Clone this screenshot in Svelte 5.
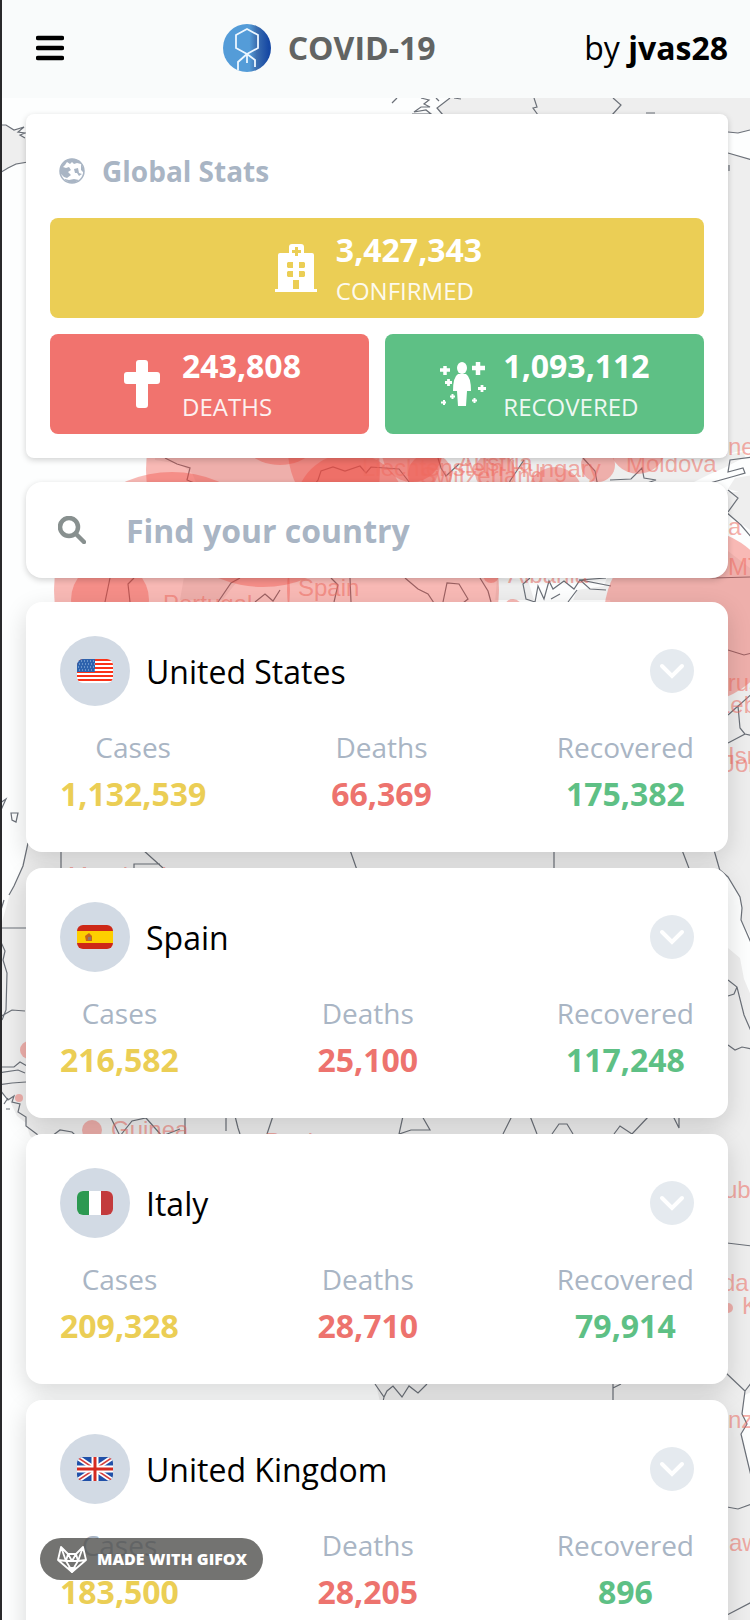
<script>
  const countries = [
    { name: 'United States', flag: 'us', cases: '1,132,539', deaths: '66,369', recovered: '175,382' },
    { name: 'Spain', flag: 'es', cases: '216,582', deaths: '25,100', recovered: '117,248' },
    { name: 'Italy', flag: 'it', cases: '209,328', deaths: '28,710', recovered: '79,914' },
    { name: 'United Kingdom', flag: 'gb', cases: '183,500', deaths: '28,205', recovered: '896' }
  ];
  let query = $state('');
</script>

<div class="page">
  <svg class="map" viewBox="0 0 750 1620" preserveAspectRatio="xMinYMin slice" aria-hidden="true">
    <g class="land">
      <path d="M443 114L437 108L450 98H760V130L748 130L738 133L728 132V120Z" />
      <path d="M728 153L760 161V480H728Z" />
      <path d="M-2 125L6 125L14 130L21 128L20 134L25 138L30 140V162L12 166L-2 174Z" />
      <path d="M155 460L180 464L192 473L197 485V500L180 600H750V420L724 455H155Z" />
      <path d="M28 843L20 873L9 897L4 915L-2 935V1090L10 1101L17 1116L26 1123L30 1136L40 1143L56 1138H374L384 1160L376 1384L384 1420V1620H760V600H610L625 700V850Z" />
    </g>
    <g class="sea">
      <path d="M690 484L710 474L724 468L745 457L744 452L724 455L760 446V474L735 478L728 489L739 492L726 492L728 514L754 533V571L728 551L694 528Z" />
      <path d="M240 578L220 603H470L450 592L445 580L405 576L419 592L434 603H495L497 578L528 580L534 600L551 603H572L577 590L604 586L607 578Z" />
      <path d="M714 868L728 877L740 897L742 908L741 920L755 945V1005L744 979L740 958L728 948Z" />
      <path d="M755 1390L745 1395L742 1414L747 1424L741 1434L746 1455L755 1490Z" />
    </g>
    <g class="coast">
      <path d="M392 103L397 98M421 98L429 100L424 104L430 107L421 107L414 112L426 110L431 114H412M436 98L439 101M450 98L437 108L443 115M454 98L461 99M534 98L537 107L533 108L538 115M613 98L621 105L612 115M646 113H655M728 132L738 133L750 130M728 153L752 160M729 165V171" />
      <path d="M-2 125L6 125L14 130L24 127L18 132L25 133L20 135L25 138M-2 174L8 168L16 164L28 162" />
      <path d="M165 458L177 464L190 468L187 480L199 485L201 499M318 498L312 488L318 480L321 471L333 467L345 471L360 466L366 473L371 467L399 469L406 478L413 487M438 458L441 468L446 476L459 464M505 499L510 481L524 460M583 458L595 471L597 482L610 490L620 499M610 480L631 479L642 468L644 478L656 480L638 486M694 500L707 492L710 483L735 476L745 473L743 468L728 472L730 460L752 457M728 490L738 498L728 512" />
      <path d="M105 602L110 578M130 602L128 584L134 578M218 602L231 583L240 578M255 602L265 594L273 601L280 590M331 578L338 585L334 602M350 578L351 602M405 578L418 589L428 594L434 603M443 602L447 583L459 584L468 599L463 603M480 578L488 591L491 602M530 578L523 584L526 599L535 602L538 586L544 599L549 581L553 589L564 581L574 589L580 580L611 586M577 590L568 602M551 599L560 594M606 578L580 580L590 589L606 590M726 512L741 525L752 538M643 575L665 577L690 575L713 578L750 577M728 650L744 655L752 653" />
      <path d="M728 715L738 706L740 728L745 734L728 743M728 715L754 692M745 734L754 736M0 803L6 799L1 810M11 813L12 820L16 822L18 813Z" />
      <path d="M28 843L23 866L14 886L9 895M4 900L1 910M61 850V868M143 850L163 868M134 870V864H160M350 850L357 870M554 850V870M682 850L690 871M714 850L720 871M-2 928H27M0 940L5 951L3 960L7 973L6 1010L2 1020M-2 1018L12 1010L25 1011M-2 1067H14L20 1062L27 1066M-2 1073L18 1070L25 1073M-2 1085L12 1083L26 1082M0 1090L8 1100L14 1096L12 1102L20 1104L18 1112L26 1117L26 1126L38 1135M8 1098L4 1104M6 1109H10M52 1136L60 1130L72 1132L75 1135" />
      <path d="M720 870L728 877L740 897L742 908L741 920L752 945M728 980L737 987L744 1015L754 1038M728 996L734 994L737 987M728 1045L735 1050L742 1047L752 1049M110 1116L116 1128L120 1136L132 1121L146 1118L162 1136L180 1129M185 1116L185 1134M226 1116L226 1131M235 1116L238 1128L240 1134M273 1116L267 1134M403 1116L399 1134L411 1130L430 1130L422 1116M512 1116L503 1134M530 1116L537 1134M552 1134L559 1124L567 1124L573 1134M614 1134L620 1126L632 1134L649 1116M673 1116L679 1128V1116" />
      <path d="M375 1384L384 1397L387 1391L393 1386L402 1397L409 1386L418 1393L427 1384M384 1397L383 1402M613 1384L613 1402M613 1388L621 1384M727 1243L752 1246M726 1373L745 1391L742 1414L747 1424L741 1434L746 1455L752 1480M745 1391L752 1382M727 1507L738 1509L752 1504M727 1615L752 1602" />
    </g>
    <g class="bubbles">
      <circle cx="172" cy="590" r="118" />
      <circle cx="263" cy="470" r="117" />
      <circle cx="280" cy="415" r="50" />
      <circle cx="393" cy="590" r="106" />
      <circle cx="365" cy="450" r="77" />
      <circle cx="350" cy="508" r="55" />
      <circle cx="110" cy="600" r="39" />
      <circle cx="412" cy="452" r="30" />
      <circle cx="430" cy="475" r="22" />
      <circle cx="495" cy="472" r="20" />
      <circle cx="555" cy="495" r="28" />
      <circle cx="598" cy="465" r="17" />
      <circle cx="638" cy="446" r="28" />
      <circle cx="692" cy="616" r="88" />
      <circle cx="491" cy="575" r="8" />
      <circle cx="513" cy="608" r="9" />
      <circle cx="29" cy="1050" r="9" />
      <circle cx="19" cy="1098" r="4" />
      <circle cx="92" cy="1130" r="10" />
      <circle cx="728" cy="1308" r="5" />
    </g>
    <g class="places">
      <text x="362" y="476">Liechtenstein</text>
      <text x="458" y="471">Austria</text>
      <text x="510" y="477">Hungary</text>
      <text x="420" y="484">Switzerland</text>
      <text x="626" y="472">Moldova</text>
      <text x="672" y="455">Ukraine</text>
      <text x="728" y="535">a</text>
      <text x="298" y="596">Spain</text>
      <text x="163" y="612">Portugal</text>
      <text x="508" y="583">Albania</text>
      <text x="728" y="575">MTS</text>
      <text x="685" y="691">Cyprus</text>
      <text x="717" y="713">Lebanon</text>
      <text x="728" y="764">Israel</text>
      <text x="723" y="772">Jordan</text>
      <text x="68" y="884">Mauritania</text>
      <text x="111" y="1138">Guinea</text>
      <text x="265" y="1150">Benin</text>
      <text x="724" y="1198">ubouti</text>
      <text x="722" y="1291">da</text>
      <text x="742" y="1314">Kenya</text>
      <text x="728" y="1428">nzania</text>
      <text x="729" y="1551">awi</text>
    </g>
  </svg>

  <header>
    <button class="menu" aria-label="Menu">
      <svg viewBox="0 0 28 26"><path d="M2 3H26M2 13H26M2 23H26" stroke="#000" stroke-width="4.5" stroke-linecap="round" /></svg>
    </button>
    <h1>
      <svg class="logo" viewBox="0 0 48 48" aria-hidden="true">
        <defs>
          <linearGradient id="blue"><stop offset=".55" stop-color="#549cd8" /><stop offset=".7" stop-color="#3c6fb0" /><stop offset=".95" stop-color="#1648a4" /></linearGradient>
          <clipPath id="disc"><circle cx="24" cy="24" r="24" /></clipPath>
        </defs>
        <circle cx="24" cy="24" r="24" fill="url(#blue)" />
        <g clip-path="url(#disc)" fill="none" stroke="#edf7ff" stroke-width="1.8">
          <path d="M24 5L35 11V24L24 30L13 24V11ZM24 30V39M24 30L15 38V48M24 30L32 36V43" />
        </g>
      </svg>
      COVID-19
    </h1>
    <a class="author" href="#author">by <b>jvas28</b></a>
  </header>

  <main>
    <section class="global">
      <h2>
        <svg viewBox="0 0 26 26" aria-hidden="true">
          <circle cx="13" cy="13" r="12" fill="#fff" stroke="#a9b5c4" stroke-width="1.5" />
          <path fill="#a9b5c4" d="M5 4Q9 0 15 1L21 3L22 6L18 5L15 6L13 4L11 6L8 4L6 7L4 9L7 10L10 9L12 12L9 14L12 17L8 20L5 19L1 15V10ZM15 11L19 10L20 15L23 16L20 18L18 15L16 15ZM6 21L10 22L15 21L20 22Q13 28 6 22ZM22 6L25 11V15L22 12Z" />
        </svg>
        Global Stats
      </h2>
      <div class="totals">
        <div class="total confirmed">
          <svg viewBox="0 0 42 48" aria-hidden="true">
            <path fill="#fff" fill-rule="evenodd" d="M17 0H26Q29 0 29 3V9H37Q39 9 39 11V45H42V48H0V45H3V11Q3 9 5 9H14V3Q14 0 17 0ZM20 3V6H17V9H20V12H23V9H26V6H23V3ZM12 19V23L13 24H18V18H13ZM24 18V24H29L30 23V19L29 18ZM12 28V32L13 33H18V27H13ZM24 27V33H29L30 32V28L29 27ZM18 36V45H24V36Z" />
          </svg>
          <p><strong>3,427,343</strong><span>CONFIRMED</span></p>
        </div>
        <div class="total deaths">
          <svg viewBox="0 0 36 48" aria-hidden="true">
            <path fill="#fff" d="M15 0H21Q24 0 24 3V12H33Q36 12 36 15V21Q36 24 33 24H24V45Q24 48 21 48H15Q12 48 12 45V24H3Q0 24 0 21V15Q0 12 3 12H12V3Q12 0 15 0Z" />
          </svg>
          <p><strong>243,808</strong><span>DEATHS</span></p>
        </div>
        <div class="total recovered">
          <svg viewBox="0 0 46 48" aria-hidden="true">
            <ellipse cx="22" cy="8" rx="5" ry="6" fill="#fff" />
            <path fill="#fff" d="M18 14H26Q31 17 31 31H27L26 46H18L17 31H13Q13 17 18 14Z" />
            <g stroke="#fff" fill="none">
              <path stroke-width="4.5" d="M38 2V15M32 8H45" />
              <path stroke-width="3.5" d="M5 6V15M0 10H10" />
              <path stroke-width="2.8" d="M8.500 19V26M5 22.500H12M42 25V32M38 28.500H46" />
              <path stroke-width="2" d="M12.500 34V39M10 36.500H15M34.500 38V43M32 40.500H37M4 40V45M1 42.500H6" />
            </g>
          </svg>
          <p><strong>1,093,112</strong><span>RECOVERED</span></p>
        </div>
      </div>
    </section>

    <label class="search">
      <svg viewBox="0 0 28 28" aria-hidden="true"><circle cx="11" cy="11" r="9" /><path d="M18 18L26 26" /></svg>
      <input type="search" aria-label="Find your country" placeholder="Find your country" bind:value={query} />
    </label>

    {#each countries as c}
      <article>
        <div class="title">
          <span class="badge">
            <svg class="flag" viewBox="0 0 36 24" aria-hidden="true">
              {#if c.flag === 'us'}
                <rect width="36" height="24" fill="#fff" />
                <path stroke="#fb3218" stroke-width="2" d="M0 1H36M0 5H36M0 9H36M0 13H36M0 17H36M0 21H36" />
                <rect width="18" height="13" fill="#2d62ad" />
                <path stroke="#a6c4e6" stroke-width="1" stroke-dasharray="1 2" d="M1 2H18M2 5H18M1 8H18M2 11H18" />
              {:else if c.flag === 'es'}
                <rect width="36" height="24" fill="#cd2817" />
                <rect y="6" width="36" height="12" fill="#fdcf00" />
                <path fill="#c6651d" d="M8 11L12 8L15 11V16H9Z" />
                <path fill="#8d7970" d="M11 12H14V15H11Z" />
              {:else if c.flag === 'it'}
                <rect width="36" height="24" fill="#fff" />
                <rect width="12" height="24" fill="#2c9951" />
                <rect x="24" width="12" height="24" fill="#c33b3d" />
              {:else}
                <rect width="36" height="24" fill="#2050a8" />
                <path stroke="#fff" stroke-width="5" d="M0 0L36 24M36 0L0 24" />
                <path stroke="#d5403c" stroke-width="1.6" d="M0 0L36 24M36 0L0 24" />
                <path stroke="#fff" stroke-width="7" d="M18 0V24M0 12H36" />
                <path stroke="#d52a20" stroke-width="3" d="M18 0V24M0 12H36" />
              {/if}
            </svg>
          </span>
          <h3>{c.name}</h3>
          <button class="expand" aria-label="Show details for {c.name}">
            <svg viewBox="0 0 44 44"><path d="M12 17L22 27L32 17" /></svg>
          </button>
        </div>
        <dl>
          <div><dt>Cases</dt><dd class="yellow">{c.cases}</dd></div>
          <div><dt>Deaths</dt><dd class="red">{c.deaths}</dd></div>
          <div><dt>Recovered</dt><dd class="green">{c.recovered}</dd></div>
        </dl>
      </article>
    {/each}
  </main>

  <a class="gifox" href="#gifox">
    <svg viewBox="0 0 32 28" aria-hidden="true">
      <path d="M5 2L12 9H20L27 2L30 15L16 27L2 15ZM5 2L10 16L2 15M27 2L22 16L30 15M10 16L16 26L22 16ZM10 16L12 9L16 16L20 9L22 16" />
      <path class="nose" d="M13 23H19L16 27Z" />
    </svg>
    MADE WITH GIFOX
  </a>
</div>

<style>
  :global(body) {
    margin: 0;
    background: #fdfefe;
  }
  .page {
    box-sizing: border-box;
    height: 100vh;
    overflow: hidden;
    position: relative;
    border-left: 2px solid #29292b;
    font-family: 'Open Sans', 'Noto Sans', sans-serif;
    color: #000;
  }
  .map {
    position: absolute;
    top: 0;
    left: -2px;
    width: calc(100% + 2px);
    height: 100%;
    z-index: -1;
  }
  .land { fill: #eeeeee; }
  .sea { fill: #fdfefe; }
  .coast { fill: none; stroke: #6b7078; stroke-width: 1.2; }
  .bubbles { fill: #f04a3e; fill-opacity: 0.38; }
  .places {
    font: 24px 'Liberation Sans', Arial, sans-serif;
    fill: #ee6b60;
    fill-opacity: 0.55;
  }
  button { border: 0; padding: 0; cursor: pointer; }
  a { color: inherit; text-decoration: none; }
  svg { display: block; flex: none; }
  h1, h2, h3, p, dl, dd { margin: 0; }

  header {
    box-sizing: border-box;
    display: flex;
    align-items: center;
    justify-content: space-between;
    height: 98px;
    padding: 0 22px 2px 34px;
    background: #f9fbfb;
    font-size: 32px;
    line-height: 42px;
  }
  .menu { padding-right: 10px; background: none; }
  .menu svg { width: 28px; height: 26px; }
  h1 {
    display: flex;
    align-items: center;
    gap: 17px;
    font-size: 32px;
    color: #626463;
  }
  .logo { width: 48px; height: 48px; }

  main {
    display: flex;
    flex-direction: column;
    gap: 16px;
    padding: 16px 22px 16px 24px;
  }
  .global {
    padding: 31px 24px 24px;
    border-radius: 8px;
    background: #fff;
    box-shadow: 0 2px 6px rgba(0, 0, 0, 0.18);
  }
  h2 {
    display: flex;
    align-items: center;
    gap: 17px;
    margin-bottom: 21px;
    padding: 0 9px;
    height: 52px;
    font-size: 28px;
    color: #a9b5c4;
  }
  h2 svg { width: 26px; height: 26px; }
  .totals {
    display: grid;
    grid-template-columns: 1fr 1fr;
    gap: 16px;
  }
  .total {
    display: flex;
    align-items: center;
    justify-content: center;
    gap: 16px;
    height: 100px;
    border-radius: 8px;
    color: #fff;
  }
  .total svg { width: 48px; height: 48px; }
  .total p { display: flex; flex-direction: column; padding-top: 4px; }
  .total strong { font-size: 32px; line-height: 42px; }
  .total span { font-size: 24px; line-height: 40px; opacity: 0.9; }
  .confirmed { grid-column: 1 / -1; background: #ebce55; }
  .deaths { background: #f1736e; }
  .recovered { background: #5ec085; }

  .search {
    display: flex;
    align-items: center;
    gap: 40px;
    height: 96px;
    margin: 8px 0;
    padding: 0 32px;
    border-radius: 16px;
    background: #fff;
    box-shadow: 0 2px 6px rgba(0, 0, 0, 0.18);
  }
  .search svg {
    width: 28px;
    height: 28px;
    fill: none;
    stroke: #88908f;
    stroke-width: 4.5;
    stroke-linecap: round;
  }
  .search input {
    flex: 1;
    min-width: 0;
    border: 0;
    padding: 0;
    outline: 0;
    background: none;
    font: 700 32px 'Open Sans', 'Noto Sans', sans-serif;
    color: #626463;
  }
  .search input::placeholder { color: #a9b5c4; opacity: 1; }

  article {
    box-sizing: border-box;
    height: 250px;
    padding: 34px;
    border-radius: 16px;
    background: #fff;
    box-shadow: 0 8px 24px rgba(0, 0, 0, 0.15);
  }
  .title { display: flex; align-items: center; gap: 16px; }
  .badge {
    display: grid;
    place-items: center;
    width: 70px;
    height: 70px;
    border-radius: 50%;
    background: #d2dae4;
  }
  .flag { width: 36px; height: 24px; border-radius: 6px; }
  h3 { flex: 1; font-size: 32px; font-weight: 400; }
  .expand {
    width: 44px;
    height: 44px;
    border-radius: 50%;
    background: #e5eaef;
  }
  .expand svg {
    fill: none;
    stroke: #fff;
    stroke-width: 4;
    stroke-linecap: round;
  }
  dl {
    display: flex;
    justify-content: space-between;
    margin-top: 18px;
    text-align: center;
  }
  dt { font-size: 28px; line-height: 46px; color: #a9b5c4; }
  dd { font-size: 32px; line-height: 48px; font-weight: 700; }
  .yellow { color: #ebce55; }
  .red { color: #ed736e; }
  .green { color: #5ec085; }

  .gifox {
    position: absolute;
    left: 38px;
    bottom: 40px;
    display: flex;
    align-items: center;
    gap: 9px;
    height: 42px;
    padding: 0 16px;
    border-radius: 21px;
    background: rgba(80, 80, 78, 0.8);
    color: #fff;
    font: 800 16px 'Open Sans', sans-serif;
  }
  .gifox svg {
    width: 32px;
    height: 28px;
    fill: none;
    stroke: #fff;
    stroke-width: 1.8;
    stroke-linejoin: round;
  }
  .gifox .nose { fill: #fff; }
</style>
